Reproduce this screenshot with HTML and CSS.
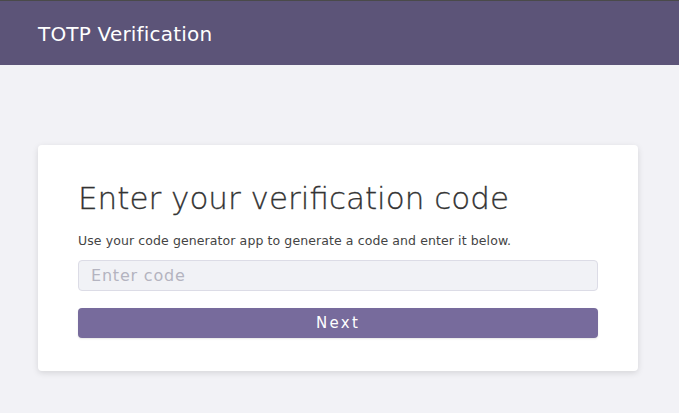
FILE: index.html
```html
<!DOCTYPE html>
<html>
<head>
<meta charset="utf-8">
<link rel="stylesheet" href="styles.css">
</head>
<body>
<header class="topbar">
  <h1 class="brand">TOTP Verification</h1>
</header>
<main class="main">
  <section class="card">
    <h2 class="title">Enter your verification code</h2>
    <p class="hint">Use your code generator app to generate a code and enter it below.</p>
    <input class="code-input" type="text" placeholder="Enter code">
    <button class="next-btn">Next</button>
  </section>
</main>
</body>
</html>
```
FILE: styles.css
```css
* { box-sizing: border-box; }
html, body { margin: 0; padding: 0; }
body {
  background: #f2f2f6;
  font-family: "DejaVu Sans", "Open Sans", sans-serif;
  height: 413px;
  overflow: hidden;
}
.topbar {
  height: 65px;
  background: #5c5478;
  border-top: 1px solid #4a4a4a;
  display: flex;
  align-items: center;
  padding: 0 38px;
}
.brand {
  margin: 0;
  color: #ffffff;
  font-weight: normal;
  font-size: 20px;
  letter-spacing: 0.2px;
  padding-top: 2px;
}
.main {
  padding: 80px 41px 0 38px;
}
.card {
  background: #ffffff;
  border-radius: 4px;
  box-shadow: 0 2px 6px rgba(0,0,0,0.12);
  padding: 34px 40px 33px 40px;
  display: flex;
  flex-direction: column;
}
.title {
  margin: 0;
  font-weight: 300;
  font-size: 31px;
  color: #333333;
  line-height: 38px;
  -webkit-text-stroke: 0.3px #333333;
}
.hint {
  margin: 16px 0 11px 0;
  font-size: 12.5px;
  letter-spacing: 0.1px;
  color: #444444;
  line-height: 16px;
}
.code-input {
  height: 31px;
  border: 1px solid #dcdce6;
  border-radius: 4px;
  background: #f1f2f6;
  padding: 0 12px;
  font-family: inherit;
  font-size: 16px;
  letter-spacing: 0.8px;
  color: #333;
  outline: none;
}
.code-input::placeholder { color: #b4b4c0; }
.next-btn {
  margin-top: 17px;
  height: 30px;
  border: none;
  border-radius: 4px;
  background: #776b9c;
  color: #ffffff;
  font-family: inherit;
  font-size: 15px;
  letter-spacing: 2.3px;
  box-shadow: 0 1px 2px rgba(0,0,0,0.1);
}
```
